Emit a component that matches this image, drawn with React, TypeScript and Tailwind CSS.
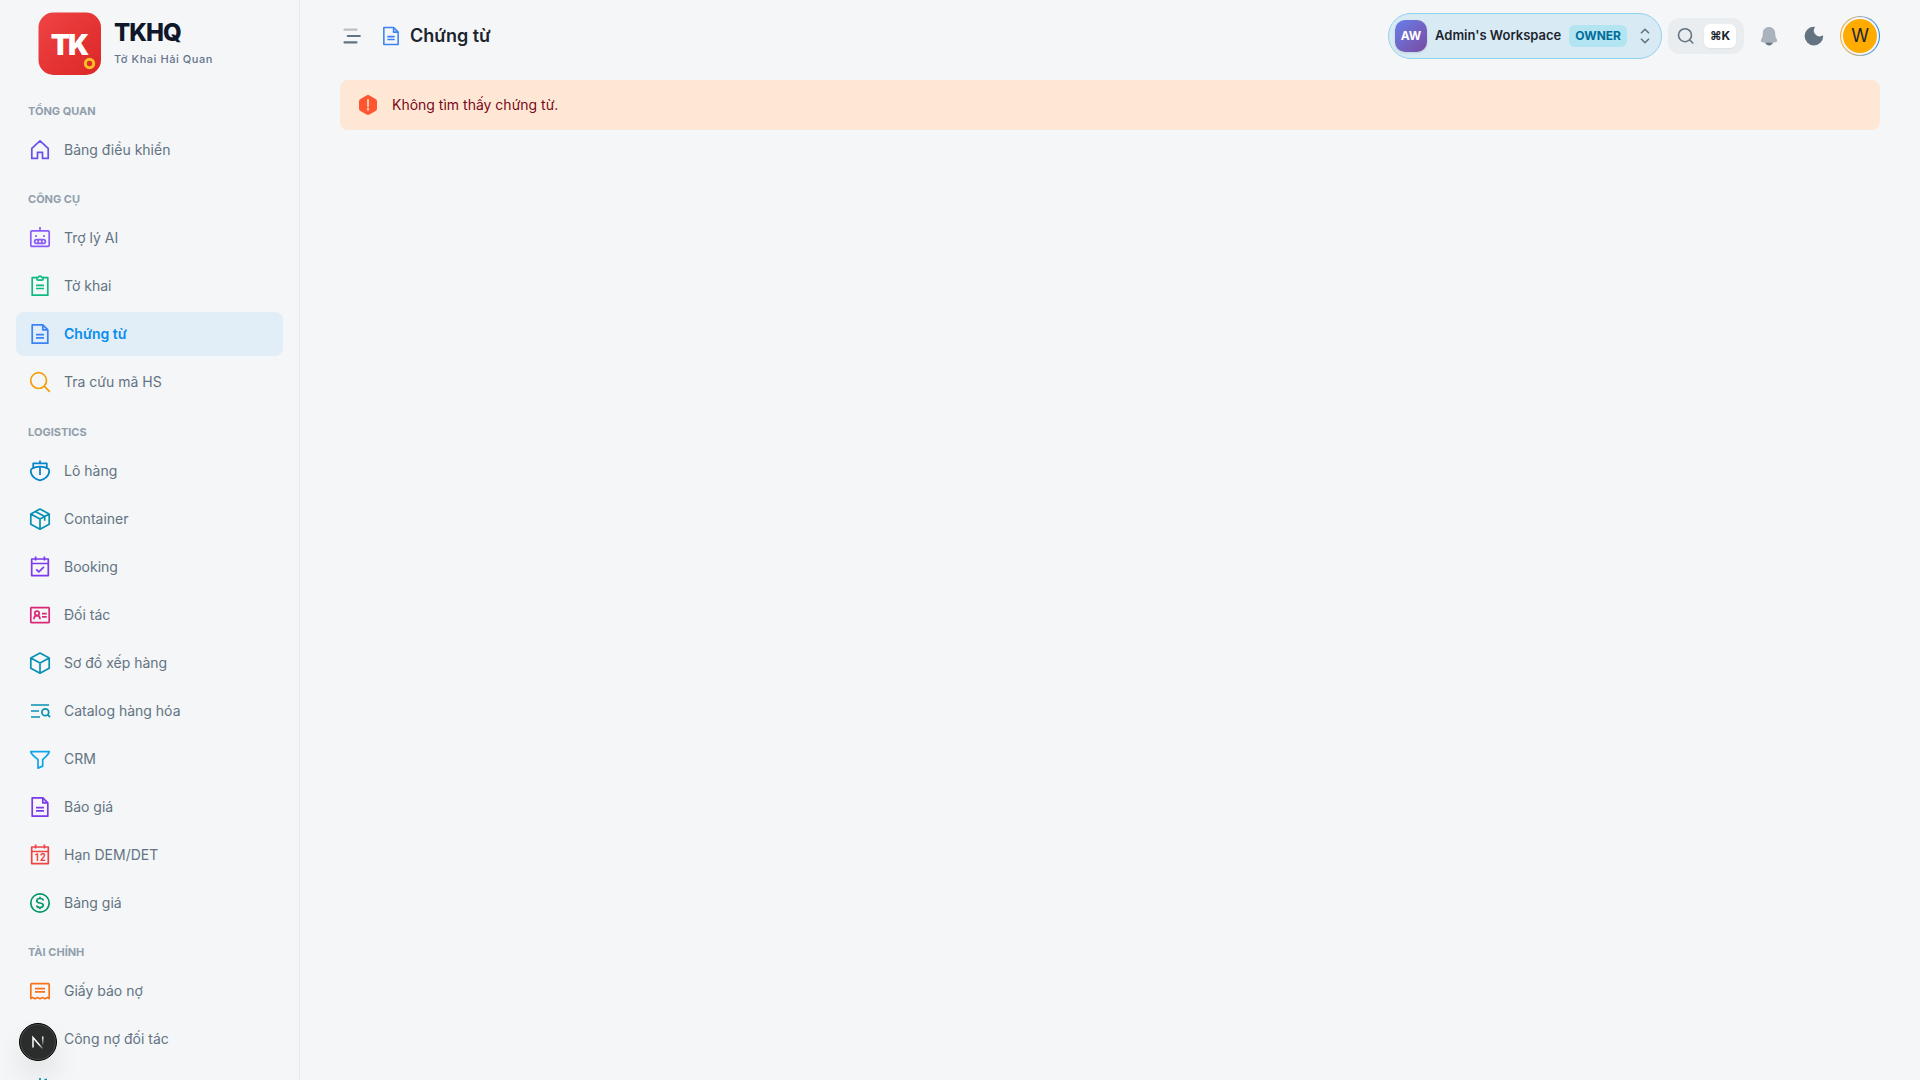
import type { ReactNode } from "react";

interface NavItem {
  label: string;
  icon: ReactNode;
  color: string;
  active?: boolean;
}

interface NavGroup {
  title: string;
  items: NavItem[];
}

function Icon({
  children,
  className = "size-6",
}: {
  children: ReactNode;
  className?: string;
}) {
  return (
    <svg
      viewBox="0 0 24 24"
      className={`shrink-0 ${className}`}
      fill="none"
      stroke="currentColor"
      strokeWidth="1.7"
      strokeLinejoin="round"
      aria-hidden="true"
    >
      {children}
    </svg>
  );
}

const documentPaths = (
  <>
    <path d="M4.2 2.8h10.6l5 5v13.4H4.2z" />
    <path d="M14.8 2.8v5h5M8 12.7h8M8 15.8h8" />
  </>
);

const calendarFrame = (
  <path d="M3.7 4h16.6v16.6H3.7zM3.7 8.5h16.6M7.6 1.5v4M16.4 1.5v4" />
);

const cubePaths = (
  <path d="M12 2l9.2 4.9v10.4L12 22.2l-9.2-4.9V6.9zM2.8 6.9l9.2 5 9.2-5M12 11.9v10.3" />
);

const groups: NavGroup[] = [
  {
    title: "Tổng quan",
    items: [
      {
        label: "Bảng điều khiển",
        color: "text-[#6b50e8]",
        icon: <path d="M3.8 10.4L12 2.8l8.2 7.6v10H14.5v-6h-5v6H3.8z" />,
      },
    ],
  },
  {
    title: "Công cụ",
    items: [
      {
        label: "Trợ lý AI",
        color: "text-[#8b5cf6]",
        icon: (
          <>
            <rect x="2.8" y="4.8" width="18.4" height="15.6" rx="1.2" />
            <rect x="6.6" y="13.6" width="10.8" height="3.8" rx="1.9" />
            <path d="M12 1v4M10.2 13.6v3.8M13.8 13.6v3.8" />
            <path d="M7.2 10h1.6M15.2 10h1.6" strokeWidth="1.8" />
          </>
        ),
      },
      {
        label: "Tờ khai",
        color: "text-[#10b981]",
        icon: (
          <>
            <path d="M8.5 3.6H4.2v17.6h15.6V3.6h-4.3" />
            <path d="M8.8 3.4h1.4c.4-.8 1-1.2 1.8-1.2s1.4.4 1.8 1.2h1.4v1.4c0 .8-.6 1.4-1.4 1.4h-3.6c-.8 0-1.4-.6-1.4-1.4z" />
            <path d="M8 11.3h8M8 14.5h8" />
          </>
        ),
      },
      {
        label: "Chứng từ",
        color: "text-[#3b82f6]",
        active: true,
        icon: documentPaths,
      },
      {
        label: "Tra cứu mã HS",
        color: "text-[#f59e0b]",
        icon: (
          <>
            <circle cx="10.6" cy="10.6" r="7.9" />
            <path d="M16.2 16.2l5.6 5.6" />
          </>
        ),
      },
    ],
  },
  {
    title: "Logistics",
    items: [
      {
        label: "Lô hàng",
        color: "text-[#0284c7]",
        icon: (
          <>
            <path d="M12 21.4c-4.2-1-9.2-4.2-9.2-9.4 0-1 .3-1.9.9-2.2C6.2 8.4 9.1 7.7 12 7.7s5.8.7 8.3 2.1c.6.3.9 1.2.9 2.2 0 5.2-5 8.4-9.2 9.4z" />
            <path d="M5.2 9.2V4.4h13.6v4.8M12 1.5v2.9M12 7.7V16" />
          </>
        ),
      },
      {
        label: "Container",
        color: "text-[#0891b2]",
        icon: (
          <>
            {cubePaths}
            <path d="M7.4 4.5l9.3 5v4.2" />
          </>
        ),
      },
      {
        label: "Booking",
        color: "text-[#7c3aed]",
        icon: (
          <>
            {calendarFrame}
            <path d="M8.2 14.3l2.7 2.6 5-5" />
          </>
        ),
      },
      {
        label: "Đối tác",
        color: "text-[#db2777]",
        icon: (
          <>
            <rect x="2.8" y="4.6" width="18.4" height="15" rx="0.6" />
            <circle cx="9" cy="10.3" r="2.2" />
            <path d="M6 16.3c0-2.4 1.1-3.6 3-3.6s3 1.2 3 3.6M14 10.6h4.7M14 13.8h4.7" />
          </>
        ),
      },
      {
        label: "Sơ đồ xếp hàng",
        color: "text-[#0891b2]",
        icon: cubePaths,
      },
      {
        label: "Catalog hàng hóa",
        color: "text-[#0891b2]",
        icon: (
          <>
            <path d="M3 6h18M3 12h8M3 18h9" />
            <circle cx="17.3" cy="13.3" r="3.4" />
            <path d="M19.7 15.7l2.4 2.4" />
          </>
        ),
      },
      {
        label: "CRM",
        color: "text-[#0ea5e9]",
        icon: (
          <path d="M2.8 4.6h18.4c-.2 2.8-4 5.5-6.5 8v6.5l-4.7 2v-8.5c-2.9-2.5-7-5.2-7.2-8z" />
        ),
      },
      {
        label: "Báo giá",
        color: "text-[#7c3aed]",
        icon: documentPaths,
      },
      {
        label: "Hạn DEM/DET",
        color: "text-[#ef4444]",
        icon: (
          <>
            {calendarFrame}
            <text
              x="12"
              y="18"
              textAnchor="middle"
              fill="currentColor"
              stroke="none"
              className="font-['Roboto',sans-serif] text-[10px] font-bold"
            >
              12
            </text>
          </>
        ),
      },
      {
        label: "Bảng giá",
        color: "text-[#059669]",
        icon: (
          <>
            <circle cx="12" cy="12" r="9.2" />
            <path d="M15.2 9.5c0-1.2-1-2-3.2-2s-3.2.8-3.2 2.2c0 1.5 1.2 2 3.2 2.3s3.2.8 3.2 2.3-1.2 2.2-3.2 2.2-3.2-.8-3.2-2M12 5.8v1.7M12 16.5v1.7" />
          </>
        ),
      },
    ],
  },
  {
    title: "Tài chính",
    items: [
      {
        label: "Giấy báo nợ",
        color: "text-[#f97316]",
        icon: (
          <path d="M2.8 19.4V5.5c0-.5.3-.8.8-.8h16.8c.5 0 .8.3.8.8v13.9l-1.800-.9-2.500 1.200-2.400-1.200-2.500 1.200-2.500-1.200-2.400 1.200-2.500-1.200zM7 9.600h10M7 12.800h10" />
        ),
      },
      {
        label: "Công nợ đối tác",
        color: "text-[#0284c7]",
        icon: <circle cx="12" cy="12" r="9" />,
      },
      {
        label: "",
        color: "text-[#0891b2]",
        icon: <path d="M12 3v18M16.5 4.5h2.5M4 20.5h16" />,
      },
    ],
  },
];

function Logo() {
  return (
    <a href="#" className="flex items-center gap-3 pl-[22px]">
      <svg viewBox="0 0 64 64" className="size-16 shrink-0" aria-hidden="true">
        <defs>
          <linearGradient id="logo" x1="0" y1="0" x2="1" y2="1">
            <stop offset="0" stopColor="#ef4444" />
            <stop offset="1" stopColor="#dc2626" />
          </linearGradient>
        </defs>
        <rect x="0.5" y="0.5" width="62.5" height="62.5" rx="15" fill="url(#logo)" />
        <text
          x="31"
          y="43"
          textAnchor="middle"
          fill="#fff"
          className="text-[28px] font-black tracking-[-2px]"
        >
          TK
        </text>
        <circle cx="51.5" cy="51.5" r="4.2" fill="none" stroke="#fbbf24" strokeWidth="3" />
      </svg>
      <span className="flex flex-col gap-1 pb-0.5">
        <span className="text-2xl leading-7 font-extrabold tracking-[-1px] text-[#0f172a]">
          TKHQ
        </span>
        <span className="text-[11px] leading-4 font-medium tracking-wider text-[#64748b]">
          Tờ Khai Hải Quan
        </span>
      </span>
    </a>
  );
}

function Sidebar() {
  return (
    <aside className="sticky top-0 h-screen w-[300px] shrink-0 overflow-y-auto border-r border-[#e6e9ed] px-4 pt-3 [scrollbar-width:none]">
      <Logo />
      <nav className="mt-2">
        {groups.map((group) => (
          <section key={group.title} className="even:pb-px">
            <h2 className="px-3 pt-[18px] pb-2 text-[11px] leading-[18px] font-bold text-[#919eab] uppercase">
              {group.title}
            </h2>
            <ul className="flex flex-col gap-1">
              {group.items.map((item) => (
                <li key={item.label}>
                  <a
                    href="#"
                    className={`flex h-11 items-center gap-3 rounded-lg px-3 text-sm ${
                      item.active
                        ? "bg-[#078dee]/8 font-semibold text-[#078dee]"
                        : "text-[#637381]"
                    }`}
                  >
                    <span className={item.color}>
                      <Icon>{item.icon}</Icon>
                    </span>
                    {item.label}
                  </a>
                </li>
              ))}
            </ul>
          </section>
        ))}
      </nav>
    </aside>
  );
}

function Header() {
  return (
    <header className="flex h-[72px] items-center justify-between">
      <div className="flex items-center">
        <button type="button" aria-label="Menu" className="text-[#637381]">
          <svg
            viewBox="0 0 24 24"
            className="size-6"
            stroke="currentColor"
            strokeWidth="2.2"
            strokeLinecap="round"
          >
            <path d="M4.5 5.7h12" opacity="0.4" />
            <path d="M7.8 12h12M4.5 18.3h12" />
          </svg>
        </button>
        <h1 className="ml-4 flex items-center gap-2 text-lg font-semibold text-[#1c252e]">
          <span className="text-[#3b82f6]">
            <Icon className="size-[22px]">{documentPaths}</Icon>
          </span>
          Chứng từ
        </h1>
      </div>

      <div className="flex items-center">
        <button
          type="button"
          className="flex h-[46px] items-center rounded-full border border-[#90d0f0] bg-[#d8ebf5] px-1.5"
        >
          <span className="flex size-8 items-center justify-center rounded-[10px] bg-linear-135 from-[#667eea] to-[#764ba2] text-xs font-bold text-white shadow-sm">
            AW
          </span>
          <span className="ml-2 text-[13px] font-semibold text-[#1c252e]">
            Admin's Workspace
          </span>
          <span className="ml-2 flex h-[22px] items-center rounded-md bg-[#b2e5f1] px-1.5 text-xs font-bold text-[#006c9c]">
            OWNER
          </span>
          <svg
            viewBox="0 0 20 20"
            className="ml-2 size-5"
            fill="none"
            stroke="#637381"
            strokeWidth="1.6"
            aria-hidden="true"
          >
            <path d="M6 7.3l4-4 4 4M6 12.7l4 4 4-4" />
          </svg>
        </button>

        <button
          type="button"
          aria-label="Search"
          className="ml-1.5 flex h-9 items-center gap-2 rounded-xl bg-[#e9edf0] px-2 text-[#637381]"
        >
          <svg
            viewBox="0 0 20 20"
            className="size-5"
            fill="none"
            stroke="currentColor"
            strokeWidth="1.6"
            strokeLinecap="round"
            aria-hidden="true"
          >
            <circle cx="9" cy="9.2" r="6.5" />
            <path d="M13.8 14l3 3" />
          </svg>
          <kbd className="flex h-6 w-8 items-center justify-center rounded-md bg-white font-[inherit] text-xs font-bold text-[#1c252e] shadow-xs">
            ⌘K
          </kbd>
        </button>

        <button
          type="button"
          aria-label="Notifications"
          className="ml-[13px] text-[#637381]"
        >
          <svg viewBox="0 0 24 24" className="size-6" fill="currentColor">
            <path d="M8 18h8.2c-.6 2.2-2.2 3.4-4.1 3.4S8.6 20.2 8 18z" />
            <path
              d="M12 3c-3.6 0-6 2.5-6.2 6-.1 2.5-.2 4-1.2 5.5-.6 1-.8 1.6-.8 2.6 0 .4.3.7.7.8 2.3.6 4.9.9 7.5.9s5.2-.3 7.5-.9c.4-.1.7-.4.7-.8 0-1-.2-1.6-.8-2.6-1-1.5-1.1-3-1.2-5.5C18 5.5 15.6 3 12 3z"
              fill="#aab3bd"
            />
          </svg>
        </button>

        <button
          type="button"
          aria-label="Dark mode"
          className="ml-[21px] text-[#637381]"
        >
          <svg viewBox="0 0 24 24" className="size-6" fill="currentColor">
            <path d="M12.3 2.8A9.3 9.3 0 1 0 21.2 12.2c.1-.6-.6-.8-1-.4A5.8 5.8 0 0 1 12.6 3.8c.4-.4.3-1-.3-1z" />
          </svg>
        </button>

        <button
          type="button"
          aria-label="Account"
          className="ml-[14px] size-10 rounded-full bg-linear-to-r from-[#ffab00] to-[#078dee] p-px"
        >
          <span className="flex size-full items-center justify-center rounded-full bg-[#f4f6f8] p-0.5">
            <span className="flex size-full items-center justify-center rounded-full bg-[#ffab00] text-lg text-[#1c252e]">
              W
            </span>
          </span>
        </button>
      </div>
    </header>
  );
}

function Alert() {
  return (
    <div
      role="alert"
      className="mt-2 flex h-[50px] items-center gap-3 rounded-lg bg-[#ffe7d6] px-4 text-sm text-[#7a0916]"
    >
      <svg viewBox="0 0 24 24" className="size-6" aria-hidden="true">
        <path
          d="M10.5 2.5c1-.6 2-.6 3 0l6 3.4c1 .6 1.5 1.5 1.5 2.6v7c0 1.1-.5 2-1.5 2.6l-6 3.4c-1 .6-2 .6-3 0l-6-3.4C3.5 17.5 3 16.6 3 15.5v-7c0-1.1.5-2 1.5-2.6z"
          fill="#ff5630"
        />
        <path
          d="M12 6.8v6.4M12 15.4v1.6"
          stroke="#ffe7d6"
          strokeWidth="1.6"
          strokeLinecap="round"
        />
      </svg>
      <p>Không tìm thấy chứng từ.</p>
    </div>
  );
}

function DevBadge() {
  return (
    <button
      type="button"
      aria-label="Dev tools"
      className="fixed bottom-[19px] left-[19px] flex size-[38px] items-center justify-center rounded-full border border-black bg-[#2a2d2c] shadow-[0_16px_32px_-8px_rgba(0,0,0,0.24)] inset-ring inset-ring-white/15"
    >
      <svg viewBox="0 0 16 16" className="size-4" fill="none" strokeWidth="1.5">
        <defs>
          <linearGradient id="fade" gradientUnits="userSpaceOnUse" x1="9" y1="10" x2="13" y2="15">
            <stop offset="0" stopColor="#fff" />
            <stop offset="1" stopColor="#fff" stopOpacity="0.1" />
          </linearGradient>
          <linearGradient id="fade-stem" x1="0" y1="0" x2="0" y2="1">
            <stop offset="0" stopColor="#fff" />
            <stop offset="1" stopColor="#fff" stopOpacity="0.1" />
          </linearGradient>
        </defs>
        <path d="M3 13.5V3.5l9.5 11" stroke="url(#fade)" />
        <path d="M12 2.5h1.5v8.5H12z" fill="url(#fade-stem)" />
      </svg>
    </button>
  );
}

export default function App() {
  return (
    <div className="flex min-h-screen bg-[#f4f6f8] font-['Inter','DejaVu_Sans',sans-serif]">
      <Sidebar />
      <main className="min-w-0 flex-1 px-10">
        <Header />
        <Alert />
      </main>
      <DevBadge />
    </div>
  );
}
